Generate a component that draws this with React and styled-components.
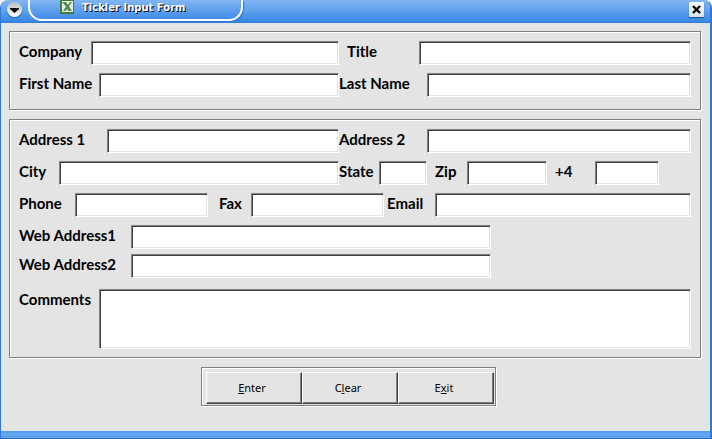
import React, { useState } from 'react'
import styled, { createGlobalStyle } from 'styled-components'

const emptyForm = {
  company: '', title: '', firstName: '', lastName: '',
  address1: '', address2: '', city: '', state: '', zip: '', plus4: '',
  phone: '', fax: '', email: '', web1: '', web2: '', comments: '',
};

const App = () => {
  const [form, setForm] = useState(emptyForm);

  const bind = (name) => ({
    id: name,
    name,
    value: form[name],
    onChange: (e) => setForm({ ...form, [name]: e.target.value }),
  });

  return (
    <>
      <GlobalStyle />
      <Window>
        <TitleBar>
          <MenuButton type="button" aria-label="Window menu">
            <svg width="15" height="15" viewBox="0 0 15 15">
              <path d="M3 6h9v1L7.500 11L3 7z" fill="#000" />
            </svg>
          </MenuButton>
          <TitleTab>
            <SheetIcon />
            <TitleText>Tickler Input Form</TitleText>
          </TitleTab>
          <CloseButton type="button" aria-label="Close">
            <svg width="13" height="13" viewBox="0 0 13 13">
              <path d="M3 3L10 10M10 3L3 10" stroke="#000" strokeWidth="2.4" />
            </svg>
          </CloseButton>
        </TitleBar>
        <Form onSubmit={(e) => e.preventDefault()}>
          <Panel>
            <Halves>
              <Field>
                <Label htmlFor="company" $width={72}>Company</Label>
                <Input {...bind('company')} />
              </Field>
              <Field $indent>
                <Label htmlFor="title" $width={72}>Title</Label>
                <Input {...bind('title')} />
              </Field>
              <Field>
                <Label htmlFor="firstName" $width={80}>First Name</Label>
                <Input {...bind('firstName')} />
              </Field>
              <Field>
                <Label htmlFor="lastName" $width={88}>Last Name</Label>
                <Input {...bind('lastName')} />
              </Field>
            </Halves>
          </Panel>
          <Panel>
            <Halves>
              <Field>
                <Label htmlFor="address1" $width={88}>Address 1</Label>
                <Input {...bind('address1')} />
              </Field>
              <Field>
                <Label htmlFor="address2" $width={88}>Address 2</Label>
                <Input {...bind('address2')} />
              </Field>
              <Field>
                <Label htmlFor="city" $width={40}>City</Label>
                <Input {...bind('city')} />
              </Field>
              <RegionFields>
                <Field>
                  <Label htmlFor="state" $width={40}>State</Label>
                  <Input {...bind('state')} />
                </Field>
                <Field>
                  <Label htmlFor="zip" $width={32}>Zip</Label>
                  <Input {...bind('zip')} />
                </Field>
                <Field>
                  <Label htmlFor="plus4" $width={40}>+4</Label>
                  <Input {...bind('plus4')} />
                </Field>
              </RegionFields>
            </Halves>
            <PhoneFields>
              <Field>
                <Label htmlFor="phone" $width={56}>Phone</Label>
                <Input {...bind('phone')} />
              </Field>
              <Field>
                <Label htmlFor="fax" $width={32}>Fax</Label>
                <Input {...bind('fax')} />
              </Field>
              <Field>
                <Label htmlFor="email" $width={48}>Email</Label>
                <Input {...bind('email')} />
              </Field>
            </PhoneFields>
            <WebFields>
              <Field>
                <Label htmlFor="web1" $width={112}>Web Address1</Label>
                <Input {...bind('web1')} />
              </Field>
              <Field>
                <Label htmlFor="web2" $width={112}>Web Address2</Label>
                <Input {...bind('web2')} />
              </Field>
            </WebFields>
            <Field>
              <Label htmlFor="comments" $width={80}>Comments</Label>
              <TextArea {...bind('comments')} />
            </Field>
          </Panel>
          <ButtonGroup>
            <Button type="submit"><u>E</u>nter</Button>
            <Button type="button" onClick={() => setForm(emptyForm)}>C<u>l</u>ear</Button>
            <Button type="button">E<u>x</u>it</Button>
          </ButtonGroup>
        </Form>
        <BottomEdge />
      </Window>
    </>
  );
};

const SheetIcon = () => (
  <svg width="14" height="14" viewBox="0 0 14 14">
    <rect width="14" height="14" fill="#3c7f3f" />
    <rect x="2" y="1" width="11" height="11" fill="#e9f1e6" />
    <path d="M2 2h4l2 3l2-3h2L9 6.500L12 11H8.500L7 9L5.500 11H3l3-4.500z" fill="#4b8f4c" />
  </svg>
);

const GlobalStyle = createGlobalStyle`
  * {
    box-sizing: border-box;
  }
  body {
    margin: 0;
    background-color: #fff;
    font-family: Lato, 'Open Sans', sans-serif;
  }
`;

const Window = styled.div`
  display: flex;
  flex-direction: column;
  min-height: 100vh;
  background-color: #e4e4e4;
  border-left: 1px solid #2f78d4;
  border-right: 2px solid #2f78d4;
  border-radius: 8px 8px 0 0;
  overflow: hidden;
`;

const TitleBar = styled.header`
  display: flex;
  align-items: flex-start;
  height: 23px;
  padding: 0 6px;
  background: linear-gradient(#82b6f2, #5a9fec 50%, #3886e4 95%, #2f78d4);
`;

const MenuButton = styled.button`
  display: flex;
  width: 15px;
  height: 15px;
  margin-top: 2px;
  padding: 0;
  border: none;
  border-radius: 50%;
  background: linear-gradient(#b8bcc4, #fff);
  box-shadow: 0 1px 1px #1f5ba8;
`;

const TitleTab = styled.div`
  display: flex;
  align-items: flex-start;
  gap: 8px;
  width: 215px;
  height: 21px;
  margin-left: 6px;
  padding-left: 30px;
  border: 2px solid #fff;
  border-top: none;
  border-radius: 0 0 14px 14px;
  background: linear-gradient(#82b6f2, #3f8ce8);
  box-shadow: 1px 1px 1px #2f78d4;
`;

const TitleText = styled.h1`
  margin: 0;
  color: #fff;
  font-family: 'DejaVu Sans', sans-serif;
  font-size: 10px;
  font-weight: bold;
  line-height: 16px;
  text-shadow: 1px 1px 0 #000;
`;

const CloseButton = styled.button`
  display: flex;
  width: 15px;
  height: 15px;
  margin: 2px 0 0 auto;
  padding: 1px;
  border: none;
  border-radius: 1px;
  background: linear-gradient(#fff, #d8e2ec);
  box-shadow: 0 1px 1px #1f4f90;
`;

const Form = styled.form`
  display: flex;
  flex: 1;
  flex-direction: column;
  gap: 9px;
  padding: 8px 9px 8px 8px;
`;

const Panel = styled.section`
  display: flex;
  flex-direction: column;
  gap: 8px;
  padding: 9px 9px 8px;
  border: 1px solid #808080;
  box-shadow: 1px 1px 0 #fff, inset 1px 1px 0 #fff;

  &:first-child {
    padding-bottom: 12px;
  }
`;

const Halves = styled.div`
  display: grid;
  grid-template-columns: minmax(0, 10fr) minmax(0, 11fr);
  row-gap: 8px;
`;

const Field = styled.div`
  display: flex;
  min-width: 0;
  padding-left: ${({ $indent }) => ($indent ? '8px' : '0')};
`;

const RegionFields = styled.div`
  display: grid;
  grid-template-columns: 88fr 112fr 104fr;
  column-gap: 8px;
  padding-right: 32px;
`;

const PhoneFields = styled.div`
  display: grid;
  grid-template-columns: 200fr 168fr 304fr;

  ${Field}:nth-child(1) {
    padding-right: 11px;
  }
  ${Field}:nth-child(2) {
    padding-right: 3px;
  }
`;

const WebFields = styled.div`
  display: flex;
  flex-direction: column;
  gap: 5px;
  max-width: 472px;
  margin-bottom: 3px;
`;

const Label = styled.label`
  flex: none;
  width: ${({ $width }) => $width}px;
  color: #000;
  font-size: 15px;
  font-weight: bold;
  line-height: 20px;
  white-space: nowrap;
`;

const Input = styled.input`
  flex: 1;
  min-width: 0;
  height: 24px;
  padding: 0 4px;
  border: 1px solid;
  border-color: #808080 #fff #fff #808080;
  border-radius: 0;
  background-color: #fff;
  box-shadow: inset 1px 1px 0 #404040, inset -1px -1px 0 #e4e4e4;
  font-family: inherit;
  font-size: 14px;
  outline: none;
`;

const TextArea = styled(Input).attrs({ as: 'textarea' })`
  height: 60px;
  resize: none;
`;

const ButtonGroup = styled.div`
  display: flex;
  align-self: center;
  margin-right: 13px;
  padding: 4px 1px 1px 4px;
  border: 1px solid #808080;
  box-shadow: 1px 1px 0 #fff, inset 1px 1px 0 #fff;
`;

const Button = styled.button`
  width: 96px;
  height: 32px;
  padding: 0 4px 2px 0;
  border: 1px solid;
  border-color: #fff #404040 #404040 #fff;
  border-radius: 0;
  background-color: #e4e4e4;
  box-shadow: inset -1px -1px 0 #808080;
  color: #000;
  font-family: 'Noto Sans', sans-serif;
  font-size: 11px;

  &:active {
    border-color: #404040 #fff #fff #404040;
  }
`;

const BottomEdge = styled.footer`
  height: 8px;
  background: linear-gradient(#4f9bee, #6aaaf2 50%, #4f9bee 70%, #9cc8f8 78%, #1f5fae 90%);
`;

export default App;
